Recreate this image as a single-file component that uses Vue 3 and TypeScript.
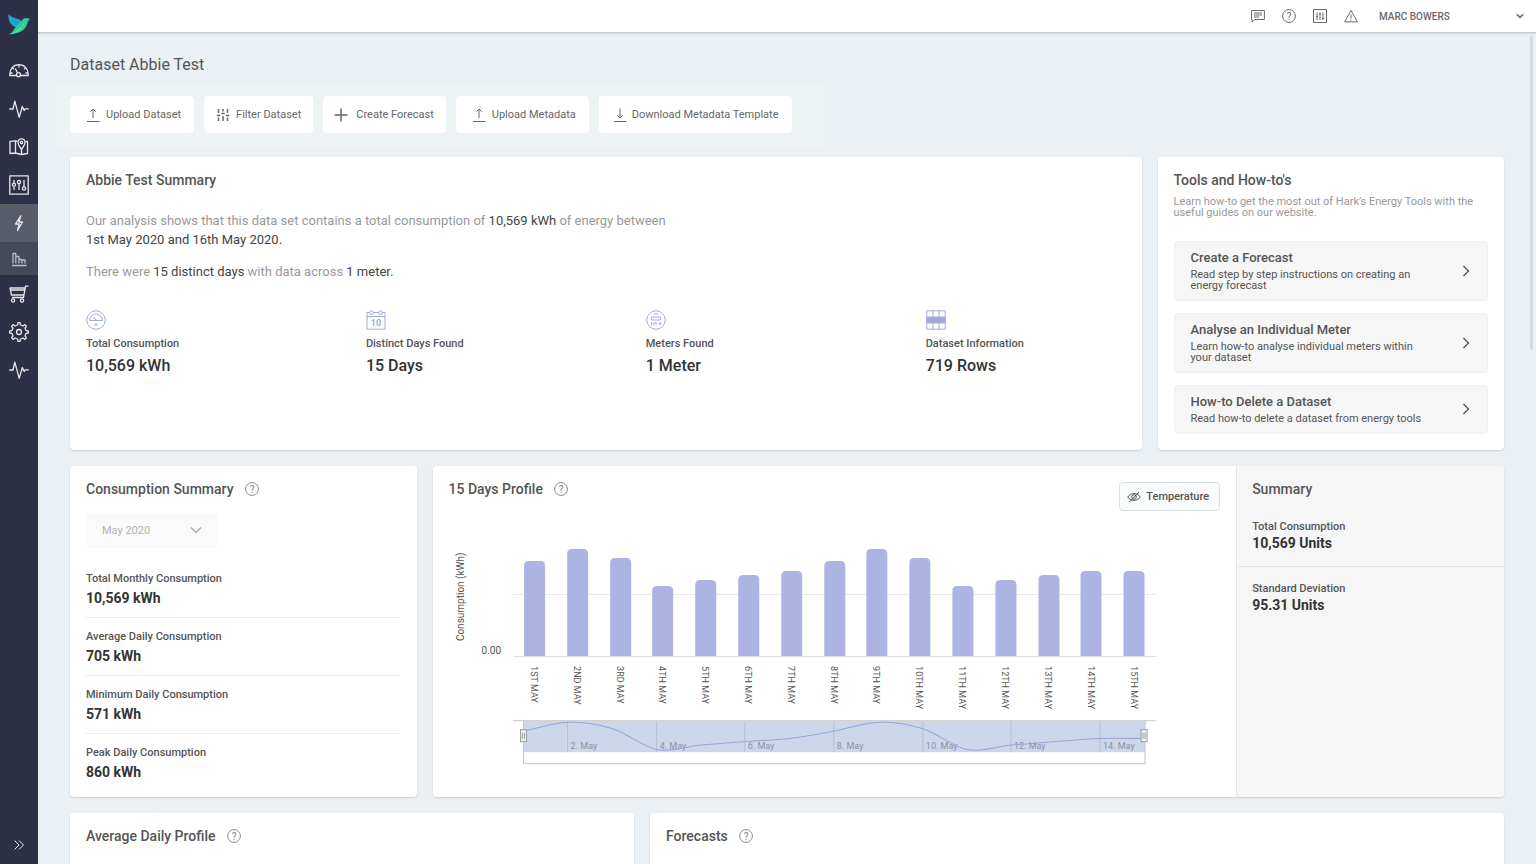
<script setup lang="ts">
import { computed } from 'vue'

interface Stat { label: string; value: string; icon?: string }
interface Guide { title: string; text: string }

const navItems = [
  { id: 'gauge', label: 'Dashboards' },
  { id: 'pulse', label: 'Sensors' },
  { id: 'map', label: 'Locations' },
  { id: 'sliders', label: 'Controls' },
  { id: 'bolt', label: 'Energy' },
  { id: 'bars', label: 'Energy datasets' },
  { id: 'cart', label: 'Marketplace' },
  { id: 'gear', label: 'Settings' },
  { id: 'pulse', label: 'Status' },
]

const actions = [
  { label: 'Upload Dataset', icon: 'upload' },
  { label: 'Filter Dataset', icon: 'filter' },
  { label: 'Create Forecast', icon: 'plus' },
  { label: 'Upload Metadata', icon: 'upload' },
  { label: 'Download Metadata Template', icon: 'download' },
]

const overview: Stat[] = [
  { label: 'Total Consumption', value: '10,569 kWh', icon: 'dial' },
  { label: 'Distinct Days Found', value: '15 Days', icon: 'calendar' },
  { label: 'Meters Found', value: '1 Meter', icon: 'meter' },
  { label: 'Dataset Information', value: '719 Rows', icon: 'rows' },
]

const guides: Guide[] = [
  { title: 'Create a Forecast', text: 'Read step by step instructions on creating an energy forecast' },
  { title: 'Analyse an Individual Meter', text: 'Learn how-to analyse individual meters within your dataset' },
  { title: 'How-to Delete a Dataset', text: 'Read how-to delete a dataset from energy tools' },
]

const monthly: Stat[] = [
  { label: 'Total Monthly Consumption', value: '10,569 kWh' },
  { label: 'Average Daily Consumption', value: '705 kWh' },
  { label: 'Minimum Daily Consumption', value: '571 kWh' },
  { label: 'Peak Daily Consumption', value: '860 kWh' },
]

const profileTotals: Stat[] = [
  { label: 'Total Consumption', value: '10,569 Units' },
  { label: 'Standard Deviation', value: '95.31 Units' },
]

const heights = [95, 107, 98, 70, 76, 81, 85, 95, 107, 98, 70, 76, 81, 85, 85]
const ordinals = ['1ST', '2ND', '3RD', '4TH', '5TH', '6TH', '7TH', '8TH', '9TH', '10TH', '11TH', '12TH', '13TH', '14TH', '15TH']

const plotLeft = 64
const plotRight = 706
const baseY = 136
const band = (plotRight - plotLeft) / heights.length

const bars = computed(() =>
  heights.map((h, i) => {
    const cx = Math.floor(plotLeft + band * (i + 0.5))
    const l = cx - 10
    const r = cx + 11
    const t = baseY - h
    return {
      cx,
      label: `${ordinals[i]} MAY`,
      d: `M${l} ${baseY}V${t + 5}Q${l} ${t} ${l + 5} ${t}H${r - 5}Q${r} ${t} ${r} ${t + 5}V${baseY}Z`,
    }
  }),
)

const navLeft = 75
const navRight = 695
const step = (navRight - navLeft) / (heights.length - 1)

const navCurve = computed(() => {
  const pts = heights.map((h, i) => ({ x: navLeft + step * i, y: 202 + (107 - h) * 0.74 }))
  let d = `M${pts[0].x} ${pts[0].y}`
  for (let i = 0; i < pts.length - 1; i++) {
    const a = pts[Math.max(i - 1, 0)]
    const b = pts[i]
    const c = pts[i + 1]
    const e = pts[Math.min(i + 2, pts.length - 1)]
    d += `C${b.x + (c.x - a.x) / 6} ${b.y + (c.y - a.y) / 6} ${c.x - (e.x - b.x) / 6} ${c.y - (e.y - b.y) / 6} ${c.x} ${c.y}`
  }
  return d
})

const navTicks = [2, 4, 6, 8, 10, 12, 14].map((day) => ({ day, x: Math.round(navLeft + step * (day - 1)) - 0.5 }))
</script>

<template>
  <div class="app">
    <nav class="sidebar" aria-label="Main">
      <a class="logo" href="#" aria-label="Home">
        <svg viewBox="0 0 24 24" width="24" height="24">
          <path d="M1.500 2C1 8 3 13 9 15.500L15 10C13.500 6 5 7 1.500 2Z" fill="#1fa3c9" />
          <path d="M2 22.500C7 20 5 19 9 15L15 8.500C17 5.500 20 5.500 23 7.200C20.500 8 21 11 19 14.500C16 20 10 21.500 2 22.500Z" fill="#2fcf9b" />
          <path d="M2 22.500C8 19.500 12 18.500 17.500 11C14 19.500 8 21.500 2 22.500Z" fill="#5be3a8" />
        </svg>
      </a>
      <a
        v-for="(item, i) in navItems"
        :key="i"
        href="#"
        :class="['nav-item', { active: item.id === 'bolt', sub: item.id === 'bars' }]"
        :aria-label="item.label"
      >
        <svg class="line" viewBox="0 0 20 20" width="20" height="20">
          <template v-if="item.id === 'gauge'">
            <path d="M7 14.500H.8C.3 8 4.500 3.700 10 3.700S19.700 8 19.200 14.500H12" />
            <circle cx="9.500" cy="13.700" r="2" />
            <path d="M8.500 11.800 6.300 7.500M10 4V6.500M3.300 6.700 5 8.300M16.700 6.700 15 8.300M1 12H3.500M16.500 12H19" />
          </template>
          <path v-else-if="item.id === 'pulse'" d="M.3 10H4L5.800 2.200 10.200 18.300 13.300 7.500 15.200 11.500 16.200 9.800H19.700" />
          <template v-else-if="item.id === 'map'">
            <path d="M8.500 4.300 6.500 3.800 1 4.300V16.500L6.500 16 12.500 17.500 18.500 16.500V4.500L16.500 4.600M6.500 4V16M12.500 13V17.500" />
            <path d="M12.500 12.500C10 9 9 7.500 9 5.300A3.500 3.500 0 0 1 16 5.300C16 7.500 15 9 12.500 12.500Z" />
            <circle cx="12.500" cy="5.500" r="1.200" />
          </template>
          <template v-else-if="item.id === 'sliders'">
            <path d="M.8 .8H19.200V19.200H.8ZM5 5V8M5 11.500V15M10 9V15M15 5V12" />
            <circle cx="5" cy="9.700" r="1.500" /><circle cx="10" cy="7" r="1.600" /><circle cx="15" cy="13.500" r="1.600" />
          </template>
          <path v-else-if="item.id === 'bolt'" d="M11.800 2.800 6.500 11H10.300L8.500 17.500 13.500 9H9.800Z" />
          <path v-else-if="item.id === 'bars'" d="M3 16.500H17.500M4 14.500V4.500H6.800V14.500M6.800 7.500H10V14.500M10 10.500H13V14.500M13 11H16V14.500" />
          <template v-else-if="item.id === 'cart'">
            <path d="M19.500 2.200H16.500L14.500 13.500H3.200M16 4H1L2.500 11H15M1.500 6H15.500" />
            <circle cx="4" cy="16.500" r="1.600" /><circle cx="13" cy="16.500" r="1.600" />
          </template>
          <template v-else>
            <path d="M8.600 3 9 .6H11L11.400 3 13.900 4 15.900 2.600 17.400 4.100 16 6.100 17 8.600 19.400 9V11L17 11.400 16 13.900 17.400 15.900 15.900 17.400 13.900 16 11.400 17 11 19.400H9L8.600 17 6.100 16 4.100 17.400 2.600 15.900 4 13.900 3 11.400 .6 11V9L3 8.600 4 6.100 2.600 4.100 4.100 2.600 6.100 4Z" />
            <circle cx="10" cy="10" r="2.500" />
          </template>
        </svg>
      </a>
      <button class="expand" type="button" aria-label="Expand menu">
        <svg class="line" viewBox="0 0 12 12" width="12" height="12"><path d="M1.500 1.500 6 6 1.500 10.500M6 1.500 10.500 6 6 10.500" /></svg>
      </button>
    </nav>

    <div class="page">
      <header class="topbar">
        <button type="button" aria-label="Messages">
          <svg class="line" viewBox="0 0 14 14" width="14" height="14"><path d="M.6 1.500H13.400V10.500H4L1.200 13V10.500H.6ZM3 4H11M3 6H11M3 8H8" /></svg>
        </button>
        <button type="button" aria-label="Help">
          <svg class="line" viewBox="0 0 14 14" width="14" height="14"><circle cx="7" cy="7" r="6.400" /><text x="7" y="10.500">?</text></svg>
        </button>
        <button type="button" aria-label="Controls">
          <svg class="line" viewBox="0 0 14 14" width="14" height="14">
            <path d="M.5 .5H13.500V13.500H.5ZM4 3.500V11M7 3.500V11M10 3.500V11M3 7.500H5M6 5H8M9 9.500H11" />
          </svg>
        </button>
        <button type="button" aria-label="Alerts">
          <svg class="line" viewBox="0 0 14 14" width="14" height="14"><path d="M7 1.500 13.400 12.800H.6ZM7 5.500V9.500M7 10.500V11.500" /></svg>
        </button>
        <button class="user" type="button">
          <span>MARC BOWERS</span>
          <svg class="line" viewBox="0 0 8 8" width="8" height="8"><path class="bold" d="M.8 2.200 4 5.400 7.200 2.200" /></svg>
        </button>
      </header>

      <main class="content">
        <h1>Dataset Abbie Test</h1>

        <div class="toolbar">
          <button v-for="(action, i) in actions" :key="i" type="button" :class="action.icon">
            <svg class="line" viewBox="0 0 14 14" width="14" height="14">
              <path v-if="action.icon === 'upload'" d="M7 10V1M4.300 3.700 7 1 9.700 3.700M1 13.500H13.500" />
              <path v-else-if="action.icon === 'download'" d="M7 .5V10M4.300 7.300 7 10 9.700 7.300M1 13.500H13.500" />
              <path v-else-if="action.icon === 'plus'" class="bold" d="M7 .5V13.500M.5 7H13.500" />
              <path v-else class="bold" d="M2.500 1V5M2.500 9.500V13M7 1V3.500M7 8V13M11.500 1V5M11.500 9.500V13M.8 7.500H4.200M5.300 5.500H8.700M9.800 7.500H13.200" />
            </svg>
            <span>{{ action.label }}</span>
          </button>
        </div>

        <div class="row quarters">
          <section class="card wide summary">
            <h2>Abbie Test Summary</h2>
            <p>
              Our analysis shows that this data set contains a total consumption of
              <strong>10,569 kWh</strong> of energy between<br />
              <strong>1st May 2020 and 16th May 2020.</strong>
            </p>
            <p>There were <strong>15 distinct days</strong> with data across <strong>1 meter.</strong></p>
            <ul class="overview">
              <li v-for="stat in overview" :key="stat.label">
                <svg class="line" viewBox="0 0 20 20" width="20" height="20">
                  <template v-if="stat.icon === 'dial'">
                    <circle cx="10" cy="10" r="9.200" />
                    <path d="M3.500 10.500A6.500 6.500 0 0 1 16.500 10.500ZM8 7.500 10 10.500M10 13V16.500M8.500 14.700H11.500" />
                  </template>
                  <template v-else-if="stat.icon === 'calendar'">
                    <path d="M3.500 2.500H1V19.200H19V2.500H16.500M7.500 2.500H12.500M1 6.500H19" />
                    <circle cx="5.500" cy="2.700" r="1.900" /><circle cx="14.500" cy="2.700" r="1.900" />
                    <text x="10" y="16">10</text>
                  </template>
                  <template v-else-if="stat.icon === 'meter'">
                    <circle cx="10" cy="10" r="9.200" />
                    <path d="M7.500 4H12.500M5.500 7H14.500V10H5.500ZM5.500 12V15.500M7.800 12V15.500M10 12V15.500M12.500 13.700H15.500M14 12.200V15.200" />
                  </template>
                  <template v-else>
                    <path d="M.8 .8H19.200V19.200H.8ZM7 .8V19.200M13 .8V19.200" />
                    <path class="solid" d="M.8 7H19.200V13H.8Z" />
                  </template>
                </svg>
                <span class="label">{{ stat.label }}</span>
                <strong class="figure">{{ stat.value }}</strong>
              </li>
            </ul>
          </section>

          <section class="card guides">
            <h2>Tools and How-to's</h2>
            <p>Learn how-to get the most out of Hark’s Energy Tools with the useful guides on our website.</p>
            <a v-for="guide in guides" :key="guide.title" href="#">
              <span class="guide-text">
                <strong>{{ guide.title }}</strong>
                <span>{{ guide.text }}</span>
              </span>
              <svg class="line" viewBox="0 0 12 12" width="12" height="12"><path d="M3.500 1 8.500 6 3.500 11" /></svg>
            </a>
          </section>
        </div>

        <div class="row quarters">
          <section class="card monthly">
            <h2>
              Consumption Summary
              <svg class="help" viewBox="0 0 14 14" width="14" height="14"><circle cx="7" cy="7" r="6.400" /><text x="7" y="10.500">?</text></svg>
            </h2>
            <div class="month">
              <select aria-label="Month" disabled><option>May 2020</option></select>
              <svg class="line" viewBox="0 0 12 12" width="12" height="12"><path d="M1 3.500 6 8.500 11 3.500" /></svg>
            </div>
            <ul>
              <li v-for="stat in monthly" :key="stat.label">
                <span class="label">{{ stat.label }}</span>
                <strong>{{ stat.value }}</strong>
              </li>
            </ul>
          </section>

          <section class="card wide profile">
            <div class="chart-pane">
              <div class="chart-head">
                <h2>
                  15 Days Profile
                  <svg class="help" viewBox="0 0 14 14" width="14" height="14"><circle cx="7" cy="7" r="6.400" /><text x="7" y="10.500">?</text></svg>
                </h2>
                <button type="button">
                  <svg class="line" viewBox="0 0 14 12" width="14" height="12">
                    <path d="M.8 6C3.500 1.500 10.500 1.500 13.200 6C10.500 10.500 3.500 10.500 .8 6ZM2.500 11 12 1" />
                    <circle cx="7" cy="6" r="2.300" />
                  </svg>
                  <span>Temperature</span>
                </button>
              </div>
              <svg class="chart" viewBox="0 0 771 260" role="img" aria-label="Daily consumption, 1st to 15th May">
                <path class="grid" :d="`M${plotLeft} 74.500H${plotRight}`" />
                <path v-for="bar in bars" :key="bar.label" class="bar" :d="bar.d" />
                <path class="axis" :d="`M${plotLeft} 136.500H${plotRight}`" />
                <text class="title" transform="translate(15 121) rotate(-90)">Consumption (kWh)</text>
                <text class="tick" x="52" y="134">0.00</text>
                <text
                  v-for="bar in bars"
                  :key="bar.label"
                  class="day"
                  :transform="`translate(${bar.cx - 3} 146) rotate(90)`"
                >{{ bar.label }}</text>
                <path class="frame" d="M74.500 200V243.500H695.500V200" />
                <path v-for="t in navTicks" :key="t.day" class="nav-grid" :d="`M${t.x} 201V232`" />
                <text v-for="t in navTicks" :key="t.day" class="nav-label" :x="t.x + 3" y="229">{{ t.day }}. May</text>
                <path class="curve" :d="navCurve" />
                <rect class="mask" x="75" y="201" width="620" height="31" />
                <path class="frame" :d="`M${plotLeft} 200.500H${plotRight}`" />
                <g v-for="x in [navLeft, navRight]" :key="x" class="handle">
                  <rect :x="x - 3.5" y="209.500" width="6" height="12" />
                  <path :d="`M${x - 1.5} 212.500V218.500M${x + 0.5} 212.500V218.500`" />
                </g>
              </svg>
            </div>
            <aside>
              <h2>Summary</h2>
              <div v-for="stat in profileTotals" :key="stat.label" class="total">
                <span class="label">{{ stat.label }}</span>
                <strong>{{ stat.value }}</strong>
              </div>
            </aside>
          </section>
        </div>

        <div class="row fifths">
          <section class="card">
            <h2>
              Average Daily Profile
              <svg class="help" viewBox="0 0 14 14" width="14" height="14"><circle cx="7" cy="7" r="6.400" /><text x="7" y="10.500">?</text></svg>
            </h2>
          </section>
          <section class="card">
            <h2>
              Forecasts
              <svg class="help" viewBox="0 0 14 14" width="14" height="14"><circle cx="7" cy="7" r="6.400" /><text x="7" y="10.500">?</text></svg>
            </h2>
          </section>
        </div>
        <div class="scroll-thumb"></div>
      </main>
    </div>
  </div>
</template>

<style>
body { margin: 0; }
</style>

<style scoped>
* { box-sizing: border-box; }
.app {
  display: flex;
  height: 100vh;
  overflow: hidden;
  background: #eaf0f4;
  color: #555;
  font-family: Roboto, "Liberation Sans", sans-serif;
  font-size: 11px;
}
h1, h2, p, ul { margin: 0; padding: 0; }
ul { list-style: none; }
a { color: inherit; text-decoration: none; }
button { font: inherit; color: inherit; border: 0; background: none; padding: 0; }
svg { display: block; flex: none; }
.line { fill: none; stroke: currentColor; stroke-width: 1; stroke-linejoin: round; }

.sidebar {
  display: flex;
  flex-direction: column;
  width: 38px;
  flex: none;
  background: #2d3047;
  color: #e8e9ec;
}
.logo { display: flex; height: 52px; padding: 12px 0 0 7px; }
.nav-item { display: flex; align-items: center; justify-content: center; height: 38px; }
.nav-item .line { stroke-width: 1.3; }
.nav-item.active { background: #585d69; }
.nav-item.sub { height: 33px; background: #444958; color: #b9bcc4; }
.expand { display: flex; justify-content: center; margin: auto 0 13px; }

.page { display: flex; flex-direction: column; flex: 1; min-width: 0; }
.topbar {
  position: relative;
  z-index: 1;
  display: flex;
  align-items: center;
  justify-content: flex-end;
  gap: 17px;
  height: 33px;
  flex: none;
  padding-right: 12px;
  background: #fff;
  border-bottom: 1px solid #c6cacd;
  box-shadow: 0 1px 2px rgba(0, 0, 0, 0.12);
  color: #6a6a6a;
}
.topbar .user {
  display: flex;
  align-items: center;
  justify-content: space-between;
  width: 145px;
  margin-left: 4px;
  font-size: 10px;
  font-weight: 500;
}
.line text, .help text {
  fill: currentColor;
  stroke: none;
  font-size: 10px;
  font-weight: 400;
  text-anchor: middle;
}

.content { position: relative; flex: 1; padding: 0 32px; overflow: hidden; }
h1 { padding: 22px 0 10px; font-size: 16px; line-height: 20px; font-weight: 400; }
.toolbar {
  display: flex;
  gap: 10px;
  width: fit-content;
  margin: 0 0 8px -13px;
  padding: 11px 33px 16px 13px;
  background: #edf3f5;
  color: #666;
}
.toolbar button {
  display: flex;
  align-items: center;
  gap: 6px;
  height: 37px;
  padding: 0 13px 0 16px;
  border-radius: 4px;
  background: #fff;
  white-space: nowrap;
}
.toolbar .filter { padding: 0 12px; }
.toolbar .plus { gap: 8px; padding: 0 12px 0 11px; }
.toolbar .download { gap: 5px; padding-left: 14px; }
.bold { stroke-width: 1.5; }

.row { display: grid; gap: 16px; margin-bottom: 16px; }
.quarters { grid-template-columns: repeat(4, minmax(0, 1fr)); }
.wide { grid-column: span 3; }
.fifths { grid-template-columns: 564fr 854fr; }
.card {
  padding: 16px;
  border-radius: 4px;
  background: #fff;
  box-shadow: 0 1px 2px rgba(0, 0, 0, 0.14);
}
.fifths .card { min-height: 280px; }
h2 {
  display: flex;
  align-items: center;
  gap: 11px;
  font-size: 14px;
  line-height: 14px;
  font-weight: 500;
}
.help { fill: none; stroke: #8a8a8a; color: #808080; }

.summary { min-height: 293px; }
.summary p { font-size: 13px; line-height: 19px; color: #999; }
.summary h2 + p { margin-top: 24px; }
.summary p + p { margin-top: 13px; }
.summary p strong { font-weight: 400; color: #444; }
.overview { display: grid; grid-template-columns: repeat(4, 1fr); gap: 80px; margin-top: 29px; }
.overview li { display: flex; flex-direction: column; white-space: nowrap; }
.overview .line { color: #a3acd9; }
.overview .line text { font-size: 9px; font-weight: 700; }
.solid { fill: currentColor; }
.label { font-size: 11px; line-height: 16px; font-weight: 500; color: #555; }
.overview .label { margin-top: 6px; }
.figure { margin-top: 4px; font-size: 16px; line-height: 20px; font-weight: 500; color: #333; }

.guides > p { margin: 9px 0 12px; font-size: 11px; line-height: 11px; min-height: 33px; color: #999; }
.guides > a {
  display: flex;
  align-items: center;
  justify-content: space-between;
  margin-top: 12px;
  padding: 8px 15px 9px 16px;
  border: 1px solid #f0f0f0;
  border-radius: 4px;
  background: #f6f6f6;
}
.guide-text { display: flex; flex-direction: column; width: 240px; line-height: 11px; }
.guide-text strong { font-size: 13px; line-height: 16px; font-weight: 500; margin-bottom: 3px; }
.guides .line { stroke-width: 1.4; }

.month { position: relative; width: 132px; margin-top: 17px; color: #aaa; }
.month select {
  display: block;
  width: 100%;
  height: 35px;
  padding: 0 16px;
  appearance: none;
  border: 0;
  border-radius: 4px;
  background: #fafafa;
  color: #b3b3b3;
  opacity: 1;
  font: inherit;
}
.month .line { position: absolute; right: 16px; top: 11px; stroke-width: 1.3; pointer-events: none; }
.monthly { padding-bottom: 14px; }
.monthly ul { margin-top: 12px; }
.monthly li { display: flex; flex-direction: column; padding: 11px 0 8px; border-bottom: 1px solid #ececec; }
.monthly li:last-child { border: 0; padding-bottom: 0; }
.monthly strong { font-size: 14px; line-height: 22px; color: #333; }

.profile { display: grid; grid-template-columns: 3fr 1fr; padding: 0; overflow: hidden; }
.chart-pane { padding: 16px; min-width: 0; }
.chart-head { display: flex; align-items: flex-start; justify-content: space-between; height: 38px; }
.chart-head button {
  display: flex;
  align-items: center;
  gap: 5px;
  height: 29px;
  padding: 0 10px 0 7px;
  border: 1px solid #d8dfe3;
  border-radius: 4px;
  background: #fafbfb;
  font-weight: 500;
}
.chart { width: 100%; height: auto; }
.grid { stroke: #e8e8e8; }
.axis { stroke: #dcdcdc; }
.bar { fill: #adb4e3; }
.chart text { fill: #555; }
.chart .title { font-size: 10px; }
.chart .tick { font-size: 10px; text-anchor: end; }
.chart .day { font-size: 9px; }
.frame { fill: none; stroke: #c4c4c4; }
.nav-grid { stroke: #dcdcdc; }
.chart .nav-label { font-size: 9px; fill: #999; }
.curve { fill: none; stroke: #adb4e3; }
.mask { fill: #6685c2; fill-opacity: 0.33; }
.handle { fill: #f2f2f2; stroke: #999; }
aside { border-left: 1px solid #e6e6e6; background: #f6f6f6; }
aside h2 { padding: 16px 15px 15px; }
.total { display: flex; flex-direction: column; padding: 8px 15px 15px; }
.total + .total { border-top: 1px solid #e6e6e6; padding-top: 14px; }
.total strong { font-size: 14px; line-height: 16px; color: #333; }

.scroll-thumb {
  position: absolute;
  right: 3px;
  top: 3px;
  width: 3px;
  height: 314px;
  border-radius: 2px;
  background: #d5dade;
}
</style>
